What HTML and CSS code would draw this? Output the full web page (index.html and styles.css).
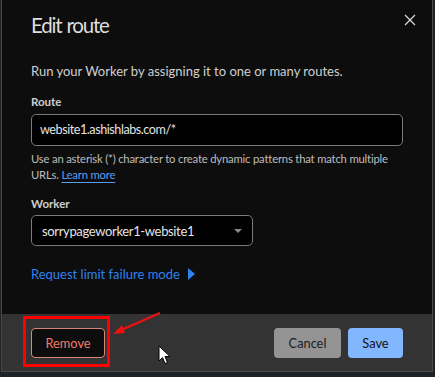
FILE: index.html
```html
<!DOCTYPE html>
<html lang="en">
  <head>
    <meta charset="UTF-8" />
    <meta name="viewport" content="width=device-width, initial-scale=1.0" />
    <title>Edit route</title>
    <link rel="stylesheet" href="styles.css">
  </head>
  <body>
    <div class="modal">
      <div class="modal-body">
        <div class="modal-head">
          <h1>Edit route</h1>
          <button class="close" aria-label="Close">
            <svg width="12" height="12" viewBox="0 0 12 12">
              <path d="M1 1 L11 11 M11 1 L1 11" stroke="#d8d8d8" stroke-width="1.3" fill="none" />
            </svg>
          </button>
        </div>
        <p class="intro">Run your Worker by assigning it to one or many routes.</p>

        <label class="field-label">Route</label>
        <div class="input">website1.ashishlabs.com/*</div>
        <p class="help">
          Use an asterisk (*) character to create dynamic patterns that match multiple
          URLs. <a href="#" class="link">Learn more</a>
        </p>

        <label class="field-label">Worker</label>
        <div class="select">
          <span>sorrypageworker1-website1</span>
          <span class="caret"></span>
        </div>

        <a href="#" class="toggle">Request limit failure mode <span class="tri"></span></a>
      </div>

      <div class="modal-foot">
        <button class="btn btn-remove">Remove</button>
        <div class="spacer"></div>
        <button class="btn btn-cancel">Cancel</button>
        <button class="btn btn-save">Save</button>
      </div>
    </div>

    <!-- annotation overlay -->
    <div class="mark-box"></div>
    <svg class="mark-arrow" width="60" height="30" viewBox="0 0 60 30">
      <path d="M49 1 L8 19" stroke="#ee1111" stroke-width="2.2" fill="none" />
      <path d="M2 22 L11 13 L14 21 Z" fill="#ee1111" />
    </svg>
    <svg class="cursor" width="14" height="20" viewBox="0 0 14 20">
      <path d="M1 1 L1 16 L4.5 12.5 L7 18.5 L9.5 17.5 L7 11.5 L12 11.5 Z" fill="#fff" stroke="#000" stroke-width="1" />
    </svg>
  </body>
</html>
```

FILE: styles.css
```css
body {
  margin: 0;
  background-color: #1e2328;
  font-family: Lato, "Open Sans", Arial, sans-serif;
  width: 435px;
  height: 377px;
  overflow: hidden;
  position: relative;
}
.modal {
  margin-left: 1px;
  width: 430px;
  height: 371px;
  background-color: #0d0d0d;
  border: 1px solid #4a4a4a;
  border-top: none;
  display: flex;
  flex-direction: column;
}
.modal-body {
  flex: 1;
  padding: 0 29px 0 29px;
}
.modal-head {
  display: flex;
  justify-content: space-between;
  align-items: flex-start;
}
h1 {
  margin: 10px 0 0 0;
  font-size: 20.5px;
  line-height: 30px;
  font-weight: 400;
  color: #dddddd;
  letter-spacing: -1.2px;
  word-spacing: 1px;
}
.close {
  background: none;
  border: none;
  padding: 0;
  margin: 14px -13px 0 0;
  cursor: pointer;
}
.intro {
  margin: 21px 0 0 0;
  font-size: 13px;
  line-height: 20px;
  color: #cfcfcf;
}
.field-label {
  display: block;
  margin-top: 13px;
  font-size: 11.5px;
  line-height: 16px;
  font-weight: 700;
  color: #cfcfcf;
}
.input {
  margin-top: 4px;
  height: 30px;
  border: 1px solid #7a7a7a;
  border-radius: 5px;
  background-color: #000;
  color: #e4e4e4;
  font-size: 12.6px;
  letter-spacing: -0.45px;
  line-height: 30px;
  padding-left: 8px;
}
.help {
  margin: 5px 0 0 0;
  font-size: 11.3px;
  letter-spacing: -0.2px;
  line-height: 16px;
  color: #bdbdbd;
}
.link {
  color: #5b9cf0;
  text-decoration: underline;
  text-underline-offset: 3px;
}
.select {
  margin-top: 3px;
  width: 200px;
  height: 29px;
  border: 1px solid #7a7a7a;
  border-radius: 5px;
  background-color: #000;
  color: #e4e4e4;
  font-size: 13px;
  letter-spacing: -0.35px;
  padding: 0 10px 0 10px;
  display: flex;
  align-items: center;
  justify-content: space-between;
}
.caret {
  width: 0;
  height: 0;
  border-left: 4px solid transparent;
  border-right: 4px solid transparent;
  border-top: 4px solid #8a8a8a;
}
.toggle {
  display: inline-flex;
  align-items: center;
  margin-top: 18px;
  font-size: 13px;
  line-height: 20px;
  color: #2f82f0;
  text-decoration: none;
}
.tri {
  margin-left: 8px;
  width: 0;
  height: 0;
  border-top: 6px solid transparent;
  border-bottom: 6px solid transparent;
  border-left: 7px solid #2f82f0;
}
.modal-foot {
  height: 57px;
  background-color: #333333;
  display: flex;
  align-items: center;
  padding: 0 29px 0 29px;
  gap: 7px;
}
.spacer {
  flex: 1;
}
.btn {
  height: 30px;
  border-radius: 4px;
  font-family: Lato, "Open Sans", Arial, sans-serif;
  font-size: 12.8px;
  padding: 0 10px;
  cursor: pointer;
  border: none;
}
.btn-remove {
  width: 74px;
  background-color: #0d0d0d;
  border: 1px solid #d9877c;
  color: #f27a6b;
}
.btn-cancel {
  width: 67px;
  background-color: #939393;
  color: #1c1c1c;
}
.btn-save {
  width: 55px;
  background-color: #82b6ff;
  color: #111;
}
.mark-box {
  position: absolute;
  left: 23px;
  top: 316px;
  width: 81px;
  height: 45px;
  border: 3px solid #ff0000;
}
.mark-arrow {
  position: absolute;
  left: 111px;
  top: 312px;
}
.cursor {
  position: absolute;
  left: 158px;
  top: 345px;
}
```
